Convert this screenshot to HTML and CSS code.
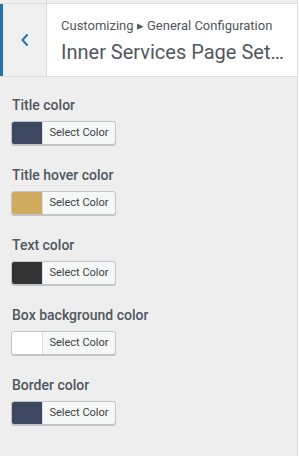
FILE: index.html
```html
<!DOCTYPE html>
<html lang="en">
<head>
    <meta charset="UTF-8">
    <meta name="viewport" content="width=device-width, initial-scale=1.0">
    <title>Inner Services Page Settings</title>
    <link rel="stylesheet" href="styles.css">
</head>
<body>

    <div class="panel">
        <div class="topbar"><span class="topbar-back"></span></div>

        <header class="section-head">
            <button class="back" aria-label="Back">
                <svg width="10" height="14" viewBox="0 0 10 14"><path d="M7.5 1.5 L2.5 7 L7.5 12.5" fill="none" stroke="#2271b1" stroke-width="2"/></svg>
            </button>
            <div class="section-title">
                <span class="crumb">Customizing &#9656; General Configuration</span>
                <h1>Inner Services Page Settings</h1>
            </div>
        </header>

        <div class="controls">
            <div class="control">
                <span class="label">Title color</span>
                <button class="picker"><span class="swatch" style="background:#3d4760"></span><span class="picker-text">Select Color</span></button>
            </div>
            <div class="control">
                <span class="label">Title hover color</span>
                <button class="picker"><span class="swatch" style="background:#cfab5f"></span><span class="picker-text">Select Color</span></button>
            </div>
            <div class="control">
                <span class="label">Text color</span>
                <button class="picker"><span class="swatch" style="background:#333333"></span><span class="picker-text">Select Color</span></button>
            </div>
            <div class="control">
                <span class="label">Box background color</span>
                <button class="picker"><span class="swatch" style="background:#ffffff"></span><span class="picker-text">Select Color</span></button>
            </div>
            <div class="control">
                <span class="label">Border color</span>
                <button class="picker"><span class="swatch" style="background:#3d4760"></span><span class="picker-text">Select Color</span></button>
            </div>
        </div>
    </div>

</body>
</html>
```

FILE: styles.css
```css
body {
    font-family: Roboto, "Liberation Sans", sans-serif;
    margin: 0;
    background: #fff;
    color: #50575e;
}

.panel {
    width: 297px;
    height: 456px;
    background: #eeeeee;
    border-right: 1px solid #dcdcde;
}

.topbar {
    height: 3px;
    border-bottom: 1px solid #dcdcde;
    display: flex;
}

.topbar-back {
    width: 46px;
    border-right: 1px solid #dcdcde;
}

.section-head {
    display: flex;
    height: 72px;
    background: #fff;
    border-bottom: 1px solid #dcdcde;
}

.back {
    width: 43px;
    margin: 0;
    padding: 0;
    background: #f0f0f1;
    border: none;
    border-left: 3px solid #2271b1;
    border-right: 1px solid #dcdcde;
    display: flex;
    align-items: center;
    justify-content: center;
    box-sizing: content-box;
}

.section-title {
    padding: 12px 0 0 14px;
    min-width: 0;
    flex: 1;
}

.crumb {
    display: block;
    font-size: 13px;
    line-height: 20px;
    color: #50575e;
}

h1 {
    margin: 3px 0 0;
    font-size: 20px;
    font-weight: 400;
    line-height: 26px;
    color: #50575e;
    white-space: nowrap;
    overflow: hidden;
    text-overflow: ellipsis;
    padding-right: 10px;
}

.controls {
    padding: 18px 0 0 11px;
    display: flex;
    flex-direction: column;
    gap: 20px;
}

.control {
    display: flex;
    flex-direction: column;
    align-items: flex-start;
    gap: 6px;
}

.label {
    font-size: 14px;
    font-weight: 500;
    line-height: 20px;
    padding-left: 1px;
}

.picker {
    display: flex;
    align-items: stretch;
    height: 24px;
    padding: 0;
    margin: 0;
    border: 1px solid #c3c4c7;
    border-radius: 3px;
    background: #f6f7f7;
    box-shadow: 0 1px 0 #c3c4c7;
    overflow: hidden;
    font-family: inherit;
    box-sizing: border-box;
}

.swatch {
    width: 30px;
    border-right: 1px solid #dcdcde;
}

.picker-text {
    width: 72px;
    font-size: 11px;
    line-height: 22px;
    color: #3c434a;
    text-align: center;
}
```
